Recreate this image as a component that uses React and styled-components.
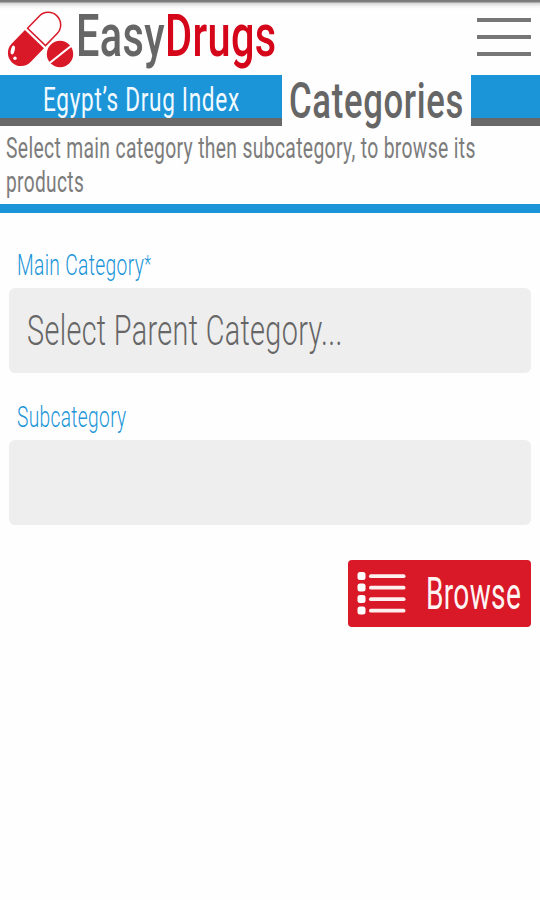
import React from 'react'
import styled, { createGlobalStyle } from 'styled-components'

const blue = '#1b95d8'
const red = '#d91828'
const grey = '#666'

const GlobalStyle = createGlobalStyle`
  * { box-sizing: border-box; }
  body {
    margin: 0;
    background: #fff;
    font-family: Roboto, "Liberation Sans", sans-serif;
  }
`

const Page = styled.main`
  width: 540px;
  height: 900px;
  overflow: hidden;
  background: #fefefe;
`

// narrow lettering: the glyphs are squeezed from their left edge
const Narrow = styled.span`
  display: block;
  width: max-content;
  white-space: pre;
  letter-spacing: ${p => p.$spacing || '0.5px'};
  transform: scaleX(${p => p.$squeeze});
  transform-origin: 0 50%;
`

const Header = styled.header`
  display: flex;
  height: 75px;
  padding: 11px 9px 0 6px;
  background: linear-gradient(#777 0, #808080 2px, #d4d4d4 3px, #f2f2f2 6px, #fefefe 9px);
`

const Logo = styled.svg`
  flex: none;
  width: 70px;
  height: 60px;
`

const Brand = styled.h1`
  flex: 1;
  margin: 0;
  font-size: 59px;
  line-height: 50px;
  font-weight: 500;
  color: ${grey};

  b {
    font-weight: 500;
    color: #d5051a;
  }
`

const MenuButton = styled.button`
  display: flex;
  flex-direction: column;
  gap: 13px;
  width: 54px;
  margin-top: 7px;
  padding: 0;
  border: 0;
  background: none;
`

const MenuLine = styled.span`
  height: 4px;
  background: #777;
`

const TitleBar = styled.div`
  display: flex;
  height: 52px;
`

const Band = styled.div`
  width: ${p => p.$width};
  flex: ${p => p.$width ? 'none' : 1};
  height: 51px;
  padding-left: 43px;
  border-bottom: 8px solid #696969;
  background: ${blue};
  color: #f3faff;
  font-size: 33px;
  line-height: 49px;
`

const Title = styled.h2`
  width: 189px;
  margin: 0;
  padding-left: 7px;
  color: ${grey};
  font-size: 50px;
  font-weight: 500;
  line-height: 53px;
`

const Hint = styled.p`
  height: 86px;
  margin: 0;
  padding: 4px 6px 0;
  border-bottom: 9px solid ${blue};
  color: #7c7c7c;
  font-size: 29px;
  font-weight: 400;
  line-height: 34px;
`

const Form = styled.form`
  display: flex;
  flex-direction: column;
  padding: 35px 9px 0;
`

const Label = styled.label`
  height: 40px;
  padding-left: 8px;
  color: ${blue};
  font-size: 29px;
  font-weight: 300;
  line-height: 34px;

  sup {
    font-size: 24px;
    line-height: 0;
    vertical-align: 3px;
  }
`

const Field = styled.div`
  height: 85px;
  margin-bottom: 27px;
  padding-left: 18px;
  border-radius: 6px;
  background: #eee;
  color: ${grey};
  font-size: 43px;
  font-weight: 300;
  line-height: 85px;
`

const BrowseButton = styled.button`
  display: flex;
  align-items: center;
  align-self: flex-end;
  width: 183px;
  height: 67px;
  margin-top: 8px;
  padding: 0 0 0 9px;
  border: 0;
  border-radius: 4px;
  background: ${red};
  color: #fff4f4;
  font-family: inherit;
  font-size: 44px;
`

const ListIcon = styled.svg`
  flex: none;
  width: 50px;
  height: 46px;
  margin-right: 19px;
`

function PillLogo() {
  return (
    <Logo viewBox="6 11 70 60">
      <g transform="translate(35 38.5) rotate(44)">
        <path d="M-12.5 -2.2 V-19 A12.5 12.5 0 0 1 12.5 -19 V-2.2 Z" fill="#fefefe" stroke={red} strokeWidth="1.5" />
        <path d="M-13.2 0.8 H13.2 V20 A13.2 13.2 0 0 1 -13.2 20 Z" fill={red} />
      </g>
      <ellipse cx="12.8" cy="50" rx="1.9" ry="4.5" fill="#fff" transform="rotate(14 12.8 50)" />
      <circle cx="15" cy="58.3" r="1.7" fill="#fff" />
      <circle cx="60" cy="54" r="13.2" fill={red} />
      <path d="M49 63.5 L71 46" stroke="#fefefe" strokeWidth="2.2" />
    </Logo>
  )
}

function ListLines() {
  return (
    <ListIcon viewBox="0 0 50 46">
      {[5, 16.5, 28, 39.5].map(y => (
        <g key={y}>
          <rect x="0.5" y={y - 4} width="8" height="8" rx="2.5" fill="#fff" />
          <rect x="12" y={y - 1.7} width="36.5" height="3.8" rx="1.9" fill="#fff0f0" />
        </g>
      ))}
    </ListIcon>
  )
}

function App() {
  return (
    <Page>
      <GlobalStyle />
      <Header>
        <PillLogo />
        <Brand><Narrow $squeeze={0.704}>Easy<b>Drugs</b></Narrow></Brand>
        <MenuButton type="button" aria-label="Menu">
          <MenuLine />
          <MenuLine />
          <MenuLine />
        </MenuButton>
      </Header>
      <TitleBar>
        <Band $width="282px"><Narrow $squeeze={0.685} $spacing="1px">Egypt’s Drug Index</Narrow></Band>
        <Title><Narrow $squeeze={0.693} $spacing="1px">Categories</Narrow></Title>
        <Band />
      </TitleBar>
      <Hint>
        <Narrow $squeeze={0.666}>Select main category then subcategory, to browse its</Narrow>
        <Narrow $squeeze={0.66}>products</Narrow>
      </Hint>
      <Form>
        <Label><Narrow $squeeze={0.664}>Main Category<sup>*</sup></Narrow></Label>
        <Field><Narrow $squeeze={0.67}>Select Parent Category...</Narrow></Field>
        <Label><Narrow $squeeze={0.661}>Subcategory</Narrow></Label>
        <Field />
        <BrowseButton type="button">
          <ListLines />
          <Narrow $squeeze={0.638}>Browse</Narrow>
        </BrowseButton>
      </Form>
    </Page>
  )
}

export default App
